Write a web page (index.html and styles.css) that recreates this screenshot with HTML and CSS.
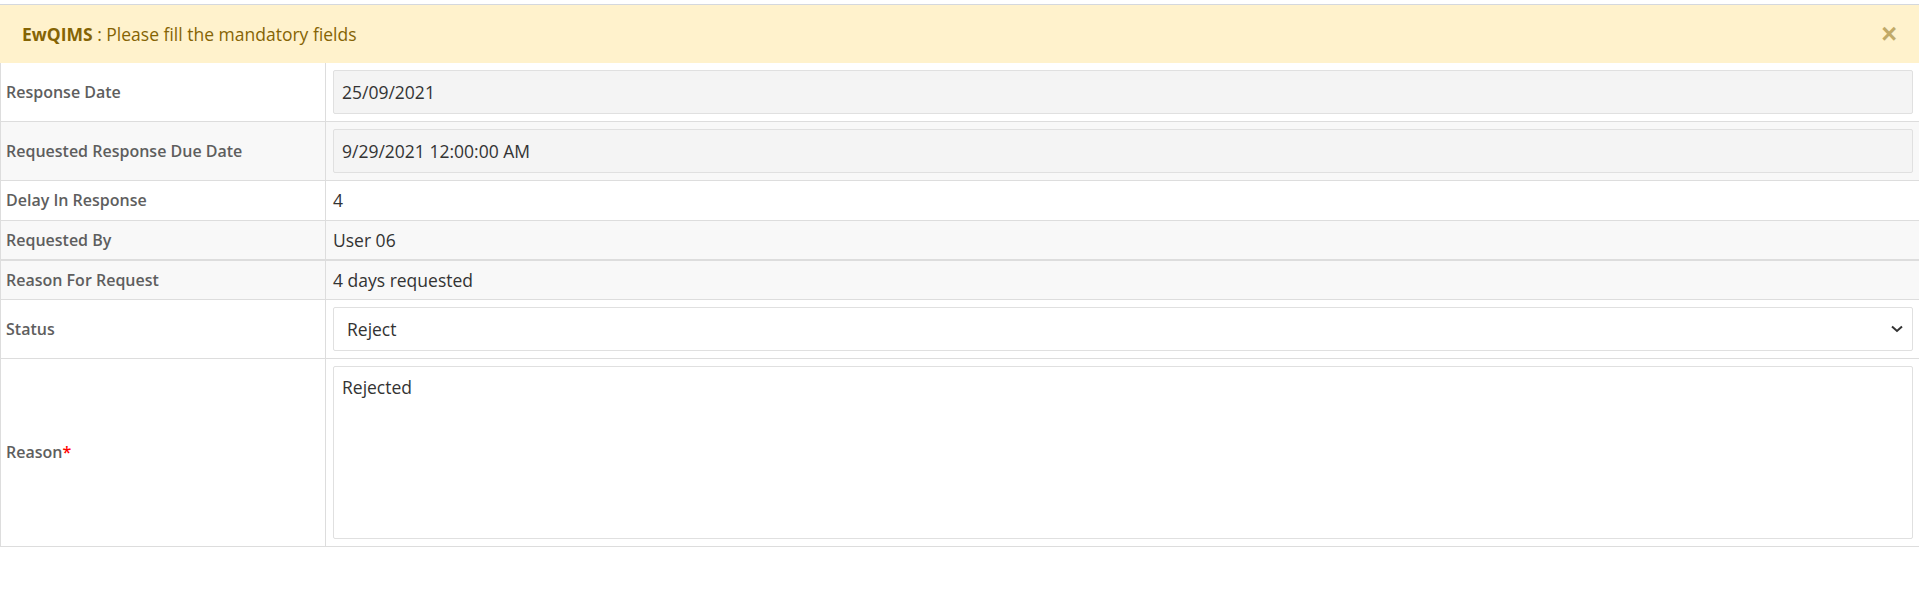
FILE: index.html
```html
<!DOCTYPE html>
<html lang="en">
<head>
    <meta charset="UTF-8">
    <meta name="viewport" content="width=device-width, initial-scale=1.0">
    <title>Response Request</title>
    <link rel="stylesheet" href="styles.css">
</head>
<body>

    <!-- Alert -->
    <div class="alert">
        <p><strong>EwQIMS</strong> : Please fill the mandatory fields</p>
        <button type="button" class="close">&times;</button>
    </div>

    <!-- Request details -->
    <table class="details">
        <tr>
            <th>Response Date</th>
            <td class="ctl"><input type="text" class="field" value="25/09/2021" readonly></td>
        </tr>
        <tr class="alt">
            <th>Requested Response Due Date</th>
            <td class="ctl"><input type="text" class="field" value="9/29/2021 12:00:00 AM" readonly></td>
        </tr>
        <tr>
            <th>Delay In Response</th>
            <td>4</td>
        </tr>
        <tr class="alt thick">
            <th>Requested By</th>
            <td>User 06</td>
        </tr>
        <tr class="alt short">
            <th>Reason For Request</th>
            <td>4 days requested</td>
        </tr>
        <tr>
            <th>Status</th>
            <td class="ctl">
                <div class="select-wrap">
                    <select class="field select">
                        <option>Select</option>
                        <option>Approve</option>
                        <option selected>Reject</option>
                    </select>
                    <svg class="chevron" width="12" height="8" viewBox="0 0 12 8">
                        <path d="M1 1.5 L6 6 L11 1.5" fill="none" stroke="#333" stroke-width="2"/>
                    </svg>
                </div>
            </td>
        </tr>
        <tr>
            <th>Reason<span class="req">*</span></th>
            <td class="ctl"><textarea class="field area">Rejected</textarea></td>
        </tr>
    </table>

</body>
</html>
```

FILE: styles.css
```css
body {
    font-family: "Open Sans", Arial, sans-serif;
    background-color: #fff;
    color: #333;
    margin: 0;
    padding: 0;
    overflow: hidden;
}

/* Alert */
.alert {
    display: flex;
    justify-content: space-between;
    align-items: center;
    margin-top: 4px;
    height: 58px;
    padding: 0 22px;
    background-color: #fff2cc;
    border-top: 1px solid #d4d8de;
    color: #856404;
    font-size: 17.5px;
}

.alert p {
    margin: 0;
}

.close {
    background: transparent;
    border: none;
    padding: 0;
    font-family: Arial, sans-serif;
    font-size: 27px;
    font-weight: bold;
    line-height: 1;
    color: #856404;
    opacity: 0.5;
    cursor: pointer;
}

/* Details table */
.details {
    width: calc(100% + 2px);
    border-collapse: collapse;
    border-left: 1px solid #ddd;
}

.details th,
.details td {
    border-bottom: 1px solid #ddd;
    padding: 7px 8px 7px 5px;
    text-align: left;
    vertical-align: middle;
    font-size: 17.5px;
    line-height: 25px;
    height: 25px;
}

.details th {
    width: 311px;
    border-right: 1px solid #ddd;
    font-size: 16px;
    font-weight: 600;
    color: #5e5e5e;
}

.details td {
    padding-left: 7px;
    color: #333;
}

.details tr.alt {
    background-color: #f8f8f8;
}

.details tr.thick th,
.details tr.thick td {
    border-bottom: 2px solid #ddd;
    padding-bottom: 6px;
}

.details tr.short th,
.details tr.short td {
    padding-bottom: 6px;
}

.req {
    color: red;
}

/* Form controls */
.field {
    display: block;
    box-sizing: border-box;
    width: 100%;
    height: 44px;
    padding: 6px 8px;
    border: 1px solid #e0e0e0;
    border-radius: 2px;
    background-color: #f4f4f4;
    font-family: "Open Sans", Arial, sans-serif;
    font-size: 17.5px;
    color: #333;
}

.field:focus {
    outline: none;
}

.select-wrap {
    position: relative;
}

.select {
    appearance: none;
    background-color: #fff;
    padding-left: 13px;
}

.chevron {
    position: absolute;
    right: 10px;
    top: 18px;
}

.area {
    height: 173px;
    padding-top: 8px;
    background-color: #fff;
    resize: none;
}
```
